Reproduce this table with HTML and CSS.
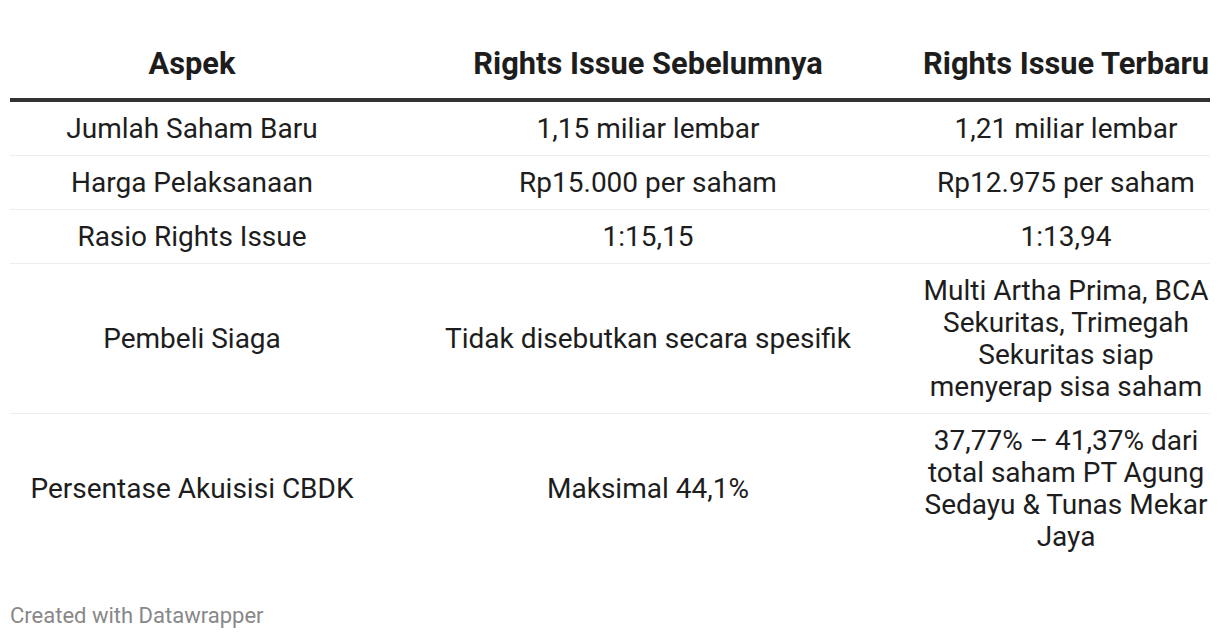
FILE: index.html
```html
<!DOCTYPE html>
<html>
<head>
<meta charset="utf-8">
<link rel="stylesheet" href="styles.css">
</head>
<body>
<div class="chart">
  <table class="tbl">
    <colgroup>
      <col class="c1">
      <col class="c2">
      <col class="c3">
    </colgroup>
    <thead>
      <tr>
        <th>Aspek</th>
        <th>Rights Issue Sebelumnya</th>
        <th>Rights Issue Terbaru</th>
      </tr>
    </thead>
    <tbody>
      <tr><td>Jumlah Saham Baru</td><td>1,15 miliar lembar</td><td>1,21 miliar lembar</td></tr>
      <tr><td>Harga Pelaksanaan</td><td>Rp15.000 per saham</td><td>Rp12.975 per saham</td></tr>
      <tr><td>Rasio Rights Issue</td><td>1:15,15</td><td>1:13,94</td></tr>
      <tr><td>Pembeli Siaga</td><td>Tidak disebutkan secara spesifik</td><td>Multi Artha Prima, BCA Sekuritas, Trimegah Sekuritas siap menyerap sisa saham</td></tr>
      <tr class="last"><td>Persentase Akuisisi CBDK</td><td>Maksimal 44,1%</td><td>37,77% – 41,37% dari total saham PT Agung Sedayu &amp; Tunas Mekar Jaya</td></tr>
    </tbody>
  </table>
  <div class="footer">Created with Datawrapper</div>
</div>
</body>
</html>
```
FILE: styles.css
```css
html, body {
  margin: 0;
  padding: 0;
  background: #ffffff;
}
body {
  font-family: Roboto, "Liberation Sans", sans-serif;
  color: #1d1d1d;
}
.chart {
  padding: 32px 10px 0 10px;
}
.tbl {
  width: 1200px;
  border-collapse: collapse;
  table-layout: fixed;
}
.c1 { width: 364px; }
.c2 { width: 548px; }
.c3 { width: 288px; }
.tbl th,
.tbl td {
  box-sizing: border-box;
  padding-left: 0;
  padding-right: 0;
  text-align: center;
}
.tbl th {
  font-size: 30.8px;
  font-weight: 700;
  line-height: 36px;
  padding-top: 14px;
  padding-bottom: 16px;
  border-bottom: 4px solid #333333;
  color: #1d1d1d;
  white-space: nowrap;
}
.tbl td {
  font-size: 28px;
  line-height: 32px;
  padding-top: 11px;
  padding-bottom: 10px;
  border-bottom: 1px solid #eeeeee;
  vertical-align: middle;
}
.tbl tr.last td {
  border-bottom: none;
}
.footer {
  margin-top: 40px;
  font-size: 22px;
  color: #888888;
}
```
